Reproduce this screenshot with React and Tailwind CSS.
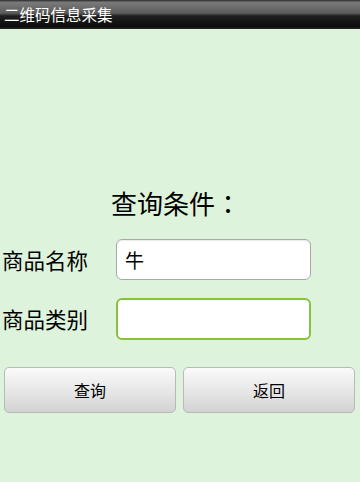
// App.jsx

// ! React Import
import React from 'react';

// ========================================================================== //
// ! COMPONENT DEFINITION: App (二维码信息采集 - query screen)
// ========================================================================== //

const cjk = "font-['Noto_Sans_CJK_SC','Noto_Sans',sans-serif]";

// * Label + input row
const FieldRow = ({ label, value, focused }) => (
  <div className="flex items-center">
    <span className="w-[116px] pl-[2px] text-[21.5px] leading-[26px] text-black">
      {label}
    </span>
    <div
      className={
        focused
          ? 'w-[195px] h-[42px] rounded-[6px] bg-white border-2 border-[#86c23a] flex items-center px-[8px]'
          : 'w-[195px] h-[41px] rounded-[6px] bg-white border border-[#a9a9a9] flex items-center px-[8px] shadow-[inset_0_1px_1px_rgba(0,0,0,0.08)]'
      }
    >
      <span className="text-[19px] leading-none text-black">{value}</span>
    </div>
  </div>
);

// * Gray gradient button
const GrayButton = ({ children }) => (
  <button
    type="button"
    className="flex-1 h-[46px] rounded-[5px] border border-[#b9b9b9] bg-[linear-gradient(#fafafa,#e4e4e4_60%,#d2d2d2)] text-[16px] text-black"
  >
    {children}
  </button>
);

const App = () => {
  return (
    <div className={`w-[360px] h-[482px] bg-[#ddf3dc] flex flex-col ${cjk}`}>
      {/* --- Title Bar --- */}
      <div className="h-[29px] bg-[linear-gradient(#2a2a2a_0%,#7a7a7a_8%,#5c5c5c_45%,#202020_55%,#0c0c0c_92%,#2a2a2a_100%)] flex items-center pl-[4px]">
        <span className="text-[15.5px] leading-none text-white">二维码信息采集</span>
      </div>

      {/* --- Heading (JP face keeps the full-width colon centred) --- */}
      <h1 className="mt-[159px] pr-[8px] text-center text-[26px] leading-[30px] text-black font-['Noto_Sans_CJK_JP','Noto_Sans_CJK_SC',sans-serif]">
        查询条件：
      </h1>

      {/* --- Form Rows --- */}
      <div className="mt-[21px] flex flex-col gap-[18px]">
        <FieldRow label="商品名称" value="牛" />
        <FieldRow label="商品类别" value="" focused />
      </div>

      {/* --- Action Buttons --- */}
      <div className="mt-[27px] pl-[4px] pr-[5px] flex gap-[7px]">
        <GrayButton>查询</GrayButton>
        <GrayButton>返回</GrayButton>
      </div>
    </div>
  );
};

export default App;
